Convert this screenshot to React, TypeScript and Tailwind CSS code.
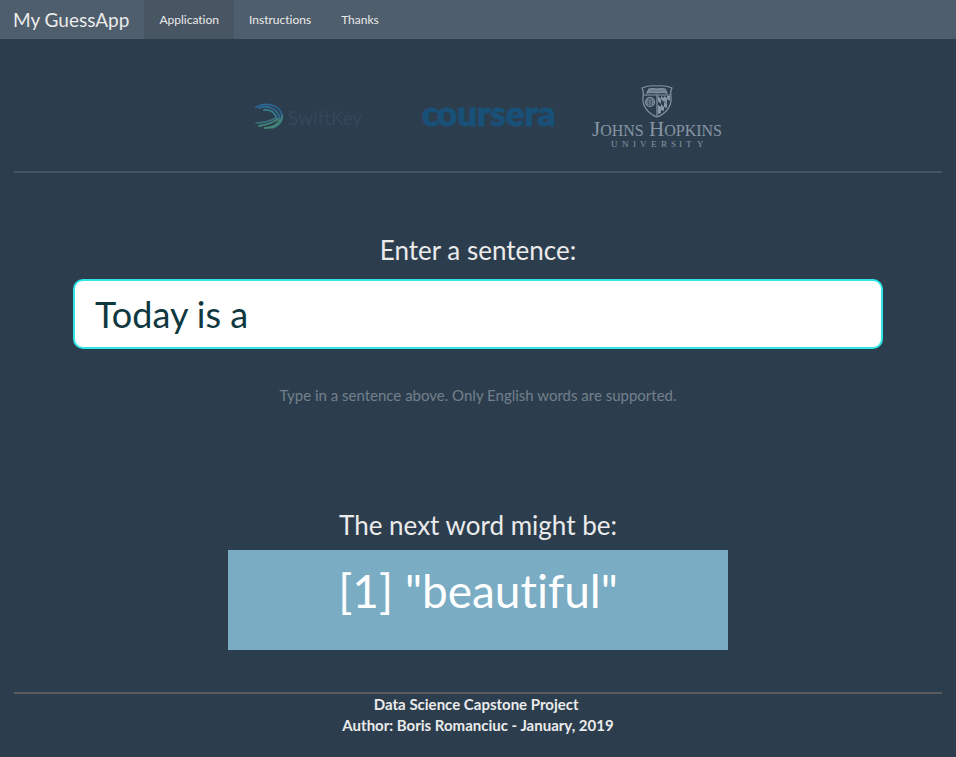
import { useState } from "react";

const tabs = ["Application", "Instructions", "Thanks"];

function SwiftKeyLogo() {
  return (
    <svg role="img" aria-label="SwiftKey" width="114" height="32" viewBox="0 0 114 32">
      <g fill="none" strokeLinecap="round">
        <path d="M5 6 C15 1 28 3 31 14" stroke="#2d6593" strokeWidth="1.8" />
        <path d="M8 7 C17 4 27 7 29 18" stroke="#2f6c94" strokeWidth="1.8" />
        <path d="M13 9 C20 8 25 12 26 19" stroke="#357b8e" strokeWidth="1.8" />
        <path d="M31 14 C32 20 28 25 21 27" stroke="#3d7f84" strokeWidth="1.8" />
        <path d="M5 22 C12 22 19 20 25 17" stroke="#3c7380" strokeWidth="1.5" />
        <path d="M8 25 C15 24 21 22 27 18" stroke="#438579" strokeWidth="1.8" />
        <path d="M14 27 C20 27 26 24 29 19" stroke="#478775" strokeWidth="1.8" />
      </g>
      <text x="37" y="24" fontFamily="Lato, sans-serif" fontSize="19" fill="#34475a">
        SwiftKey
      </text>
    </svg>
  );
}

function CourseraLogo() {
  return (
    <svg role="img" aria-label="coursera" width="144" height="56" viewBox="0 0 144 56">
      <text
        x="1 16"
        y="37"
        fontFamily="Lato, sans-serif"
        fontWeight="900"
        fontSize="35"
        fill="#195078"
        stroke="#195078"
        strokeWidth="1"
      >
        coursera
      </text>
    </svg>
  );
}

function JohnsHopkinsLogo() {
  return (
    <svg role="img" aria-label="Johns Hopkins University" width="136" height="64" viewBox="0 0 136 64">
      <g fill="none" stroke="#8795a4" strokeWidth="1.2">
        <path d="M51 3 Q58 0 66 1 Q74 0 81 3 Q79 7 80 12 C81 22 74 29 66 32 C58 29 51 22 52 12 Q53 7 51 3 Z" />
        <path d="M53 10 H79 M66 10 V31" />
        <path d="M58 4 Q62 3 66 4 Q70 3 74 4 L76 8 Q70 7 66 8 Q62 7 56 8 Z" fill="#6f7f90" />
        <circle cx="59" cy="17" r="4.5" />
        <path d="M54 17 H64 M59 12 V22 M55 15 H63 M55 19 H63 M57 13 Q55 17 57 21 M61 13 Q63 17 61 21" strokeWidth=".7" />
      </g>
      <path
        d="M67 11 L70 14 V19 L67 16 Z M70 11 L73 13 V17 L70 14 Z M73 17 L76 19 V23 L73 22 Z M73 11 L76 13 V19 L73 16 Z M67 20 L70 22 V28 L67 29 Z M70 19 L73 22 V26 L70 25 Z M76 11 H79 V16 L76 14 Z"
        fill="#8795a4"
      />
      <g fontFamily="'Liberation Serif', serif" fontSize="21" fill="#8795a4">
        <text x="1" y="51">
          J<tspan fontSize="16">OHNS</tspan>
        </text>
        <text x="58" y="51">
          H<tspan fontSize="16">OPKINS</tspan>
        </text>
      </g>
      <text
        x="20 31 42 49 60 70 80 88 95 106"
        y="62"
        fontFamily="'Liberation Serif', serif"
        fontSize="9"
        fill="#8795a4"
      >
        UNIVERSITY
      </text>
    </svg>
  );
}

export default function App() {
  const [active, setActive] = useState("Application");
  const [sentence, setSentence] = useState("Today is a");

  return (
    <div className="min-h-screen bg-[#2c3e4e] font-[Lato,sans-serif] text-[15px] leading-[21px] text-[#ebebeb] [font-variant-ligatures:none]">
      <nav className="flex h-[39px] items-stretch bg-[#4f5e6c]">
        <a href="#" className="flex items-center pr-[15px] pl-[13px] text-[19px]">
          My GuessApp
        </a>
        <div className="flex">
          {tabs.map((tab) => (
            <button
              key={tab}
              type="button"
              onClick={() => setActive(tab)}
              className={`px-[15px] text-xs ${active === tab ? "bg-[#485563]" : ""}`}
            >
              {tab}
            </button>
          ))}
        </div>
      </nav>

      <main className="px-3.5">
        <div className="flex h-[132px] items-center justify-center gap-14 pt-6 pl-[22px]">
          <SwiftKeyLogo />
          <div className="flex items-center gap-[26px]">
            <CourseraLogo />
            <JohnsHopkinsLogo />
          </div>
        </div>
        <hr className="border-t-2 border-[#445464]" />

        <div className="flex flex-col items-center px-[59px] pt-[61px]">
          <label htmlFor="sentence" className="text-[26px] leading-8">
            Enter a sentence:
          </label>
          <input
            id="sentence"
            type="text"
            value={sentence}
            onChange={(e) => setSentence(e.target.value)}
            className="mt-[13px] h-[70px] w-full rounded-[10px] border-2 border-[#2ee6e6] bg-white px-5 text-4xl text-[#0f3840] outline-none"
          />
          <p className="mt-9 text-[#73808b]">
            Type in a sentence above. Only English words are supported.
          </p>
        </div>

        <section className="flex flex-col items-center pt-[103px]">
          <h3 className="text-[26px] leading-8">The next word might be:</h3>
          <output
            htmlFor="sentence"
            className="mt-[9px] block h-[100px] w-full max-w-[500px] bg-[#7aacc4] pt-[11px] text-center text-[46px] leading-[60px] text-white"
          >
            [1] "beautiful"
          </output>
        </section>

        <hr className="mt-[42px] border-t-2 border-[#5a5b5d]" />
        <footer className="text-center font-bold">
          <p>Data Science Capstone Project&nbsp;</p>
          <p>Author: Boris Romanciuc - January, 2019</p>
        </footer>
      </main>
    </div>
  );
}
